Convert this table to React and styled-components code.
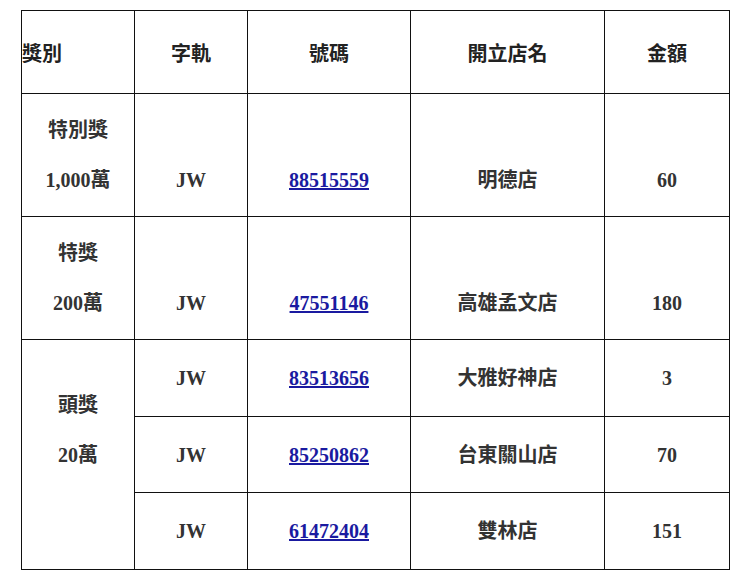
import React from 'react';
import styled, { createGlobalStyle } from 'styled-components';

const GlobalStyle = createGlobalStyle`
  body {
    margin: 0;
    background: #fff;
    font-family: "Liberation Serif", "Noto Sans CJK TC", serif;
  }
`;

const Page = styled.div`
  padding: 10px 21px;
`;

const PrizeTable = styled.table`
  width: 708px;
  table-layout: fixed;
  border-collapse: collapse;
  border: 1.5px solid #111;
  color: #333;
  font-size: 20px;
  font-weight: bold;
`;

const HeadCell = styled.th`
  height: 82px;
  padding: 0;
  border: 1.5px solid #111;
  color: #222;
  font-weight: bold;
  text-align: ${({ align }) => align || 'center'};
  vertical-align: middle;
`;

const Row = styled.tr`
  height: ${({ h }) => h}px;
`;

const Cell = styled.td`
  padding: ${({ pad }) => pad || '0'};
  border: 1.5px solid #111;
  text-align: center;
  line-height: 50px;
  vertical-align: ${({ valign }) => valign || 'middle'};
`;

const Ticket = styled.a`
  color: #1a1aa0;
  text-decoration: underline;
`;

const columns = [113, 113, 163, 194, 125];

const prizes = [
  {
    title: '特別獎',
    amount: '1,000萬',
    heights: [122],
    entries: [{ track: 'JW', number: '88515559', store: '明德店', value: '60' }],
  },
  {
    title: '特獎',
    amount: '200萬',
    heights: [121],
    entries: [{ track: 'JW', number: '47551146', store: '高雄孟文店', value: '180' }],
  },
  {
    title: '頭獎',
    amount: '20萬',
    heights: [77, 76, 77],
    entries: [
      { track: 'JW', number: '83513656', store: '大雅好神店', value: '3' },
      { track: 'JW', number: '85250862', store: '台東關山店', value: '70' },
      { track: 'JW', number: '61472404', store: '雙林店', value: '151' },
    ],
  },
];

const EntryCells = ({ entry, bottom }) => {
  const props = bottom ? { valign: 'bottom', pad: '0 0 11px' } : {};
  return (
    <>
      <Cell {...props}>{entry.track}</Cell>
      <Cell {...props}>
        <Ticket href="#">{entry.number}</Ticket>
      </Cell>
      <Cell {...props}>{entry.store}</Cell>
      <Cell {...props}>{entry.value}</Cell>
    </>
  );
};

const App = () => {
  return (
    <Page>
      <GlobalStyle />
      <PrizeTable>
        <colgroup>
          {columns.map((w, i) => (
            <col key={i} style={{ width: w }} />
          ))}
        </colgroup>
        <thead>
          <tr>
            <HeadCell align="left">獎別</HeadCell>
            <HeadCell>字軌</HeadCell>
            <HeadCell>號碼</HeadCell>
            <HeadCell>開立店名</HeadCell>
            <HeadCell>金額</HeadCell>
          </tr>
        </thead>
        <tbody>
          {prizes.map((prize) => {
            const single = prize.entries.length === 1;
            return prize.entries.map((entry, i) => (
              <Row key={prize.title + i} h={prize.heights[i]}>
                {i === 0 && (
                  <Cell
                    rowSpan={prize.entries.length}
                    valign={single ? 'middle' : 'top'}
                    pad={single ? '11px 0' : '40px 0 0'}
                  >
                    {prize.title}
                    <br />
                    {prize.amount}
                  </Cell>
                )}
                <EntryCells entry={entry} bottom={single} />
              </Row>
            ));
          })}
        </tbody>
      </PrizeTable>
    </Page>
  );
};

export default App;
